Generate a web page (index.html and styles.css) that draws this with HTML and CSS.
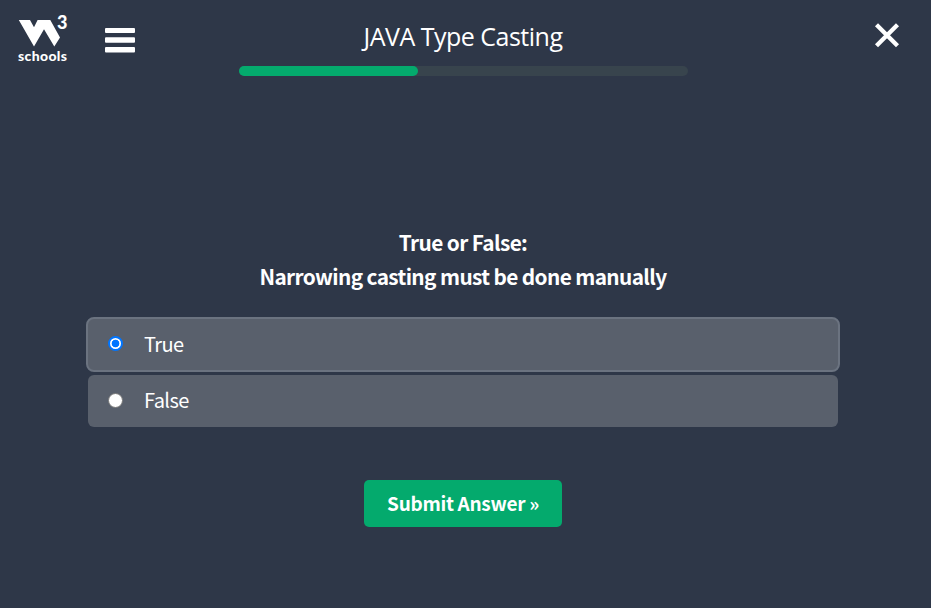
FILE: index.html
```html
<!DOCTYPE html>
<html lang="en">
<head>
<meta charset="utf-8">
<title>JAVA Type Casting</title>
<link rel="stylesheet" href="styles.css">
</head>
<body>
<header class="header">
  <div class="left">
    <a class="logo">
      <svg width="50" height="34" viewBox="0 0 50 34" aria-hidden="true"><path fill="#fff" d="M.8 6H12l4 7.300L19.600 6H32.300L42 23.500l-5.700 9L26 15.300 16 32.500z"/></svg>
      <span class="three">3</span>
      <span class="schools">schools</span>
    </a>
    <svg class="menu" width="30" height="26" viewBox="0 0 30 26" fill="#fff" aria-hidden="true"><rect width="30" height="5" rx="1"/><rect y="9.300" width="30" height="5.400" rx="1"/><rect y="19" width="30" height="5.400" rx="1"/></svg>
  </div>
  <div class="center">
    <h1 class="title">JAVA Type Casting</h1>
    <div class="progress"><div class="bar"></div></div>
  </div>
  <svg class="close" width="26" height="26" viewBox="0 0 26 26" aria-hidden="true"><path d="M2.500 2.700L23.500 23.700M23.500 2.700L2.500 23.700" stroke="#fff" stroke-width="4.300"/></svg>
</header>
<main class="quiz">
  <p class="question">True or False:<br>Narrowing casting must be done manually</p>
  <div class="options">
    <label class="option selected"><span class="radio"></span><span>True</span></label>
    <label class="option"><span class="radio"></span><span>False</span></label>
  </div>
  <button class="submit">Submit Answer »</button>
</main>
</body>
</html>
```
FILE: styles.css
```css
* { box-sizing: border-box; }
body { margin: 0; height: 608px; overflow: hidden; background: #2e3748; color: #fff; font-family: "Noto Sans CJK SC", "Open Sans", sans-serif; }
.header { display: grid; grid-template-columns: 239px 449px 1fr; height: 90px; }
.left { display: flex; padding: 14px 0 0 18px; }
.logo { position: relative; display: block; width: 50px; height: 50px; }
.logo svg { display: block; }
.three { position: absolute; left: 39px; top: -3px; font: 900 18px/22px Lato, sans-serif; }
.schools { display: block; font: 900 14px/16px Lato, sans-serif; letter-spacing: 0.350px; }
.menu { margin: 14px 0 0 36.5px; }
.center { padding-top: 18px; }
.title { margin: 0; font: 400 25px/36px "Open Sans", sans-serif; text-align: center; white-space: nowrap; letter-spacing: -0.500px; text-indent: -1px; }
.progress { margin-top: 12px; height: 10px; border-radius: 5px; background: #38444d; }
.bar { width: 179px; height: 10px; border-radius: 5px; background: #04aa6d; }
.close { justify-self: end; margin: 22px 31px 0 0; }
.quiz { display: flex; flex-direction: column; align-items: center; width: 926px; padding-top: 135px; }
.question { margin: 0; font-size: 20.800px; line-height: 34px; font-weight: 700; text-align: center; white-space: nowrap; letter-spacing: -0.620px; }
.options { width: 754px; margin-top: 24px; }
.option { display: flex; align-items: center; margin: 3px 2px 0; height: 52px; padding: 0 0 2px 20px; border-radius: 6px; background: #59606c; font-size: 20px; line-height: 30px; letter-spacing: -0.600px; }
.option.selected { margin: 0; height: 55px; border: 2px solid #6b7380; border-radius: 8px; padding-bottom: 1px; }
.radio { width: 15px; height: 15px; margin: 0 21px 0 0; border: 1px solid #767676; border-radius: 50%; background: #fff; }
.selected .radio { margin-top: -2px; border: 2px solid #0075ff; background: radial-gradient(circle, #0075ff 0 3.500px, #fff 4.200px); }
.submit { width: 198px; height: 47px; margin-top: 53px; padding: 0 0 2px; border: 0; border-radius: 5px; background: #04aa6d; color: #fff; font: 700 19px/45px "Noto Sans CJK SC", sans-serif; letter-spacing: -0.300px; white-space: nowrap; }
```
